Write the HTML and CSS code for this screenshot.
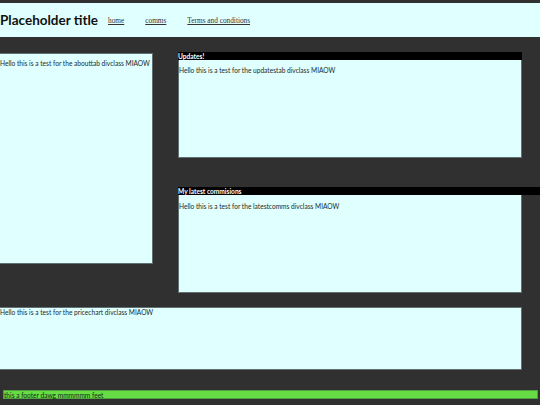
FILE: index.html
```html
<!DOCTYPE html>
<html>
<head>
<meta charset="utf-8">
<link rel="stylesheet" href="styles.css">
</head>
<body>
<header class="topbar">
  <h1 class="title">Placeholder title</h1>
  <nav class="nav">
    <a href="#" class="nav-link">home</a>
    <a href="#" class="nav-link">comms</a>
    <a href="#" class="nav-link">Terms and conditions</a>
  </nav>
</header>
<main class="main">
  <section class="abouttab">Hello this is a test for the abouttab divclass MIAOW</section>
  <div class="rightcol">
    <div class="panel">
      <div class="panel-head">Updates!</div>
      <div class="panel-body updates">Hello this is a test for the updatestab divclass MIAOW</div>
    </div>
    <div class="panel panel-wide">
      <div class="panel-head">My latest commisions</div>
      <div class="panel-body comms">Hello this is a test for the latestcomms divclass MIAOW</div>
    </div>
  </div>
</main>
<section class="pricechart">Hello this is a test for the pricechart divclass MIAOW</section>
<footer class="footer">this a footer dawg mmmmmm feet</footer>
</body>
</html>
```
FILE: styles.css
```css
html, body {
  margin: 0;
  padding: 0;
}
body {
  background: #303030;
  font-family: Lato, "Noto Sans", sans-serif;
  font-size: 6.6px;
  color: #1a2a2a;
  width: 540px;
  height: 405px;
  overflow: hidden;
}
.topbar {
  margin-top: 3px;
  height: 34px;
  background: #e0ffff;
  display: flex;
  align-items: center;
}
.title {
  margin: 0;
  font-family: Lato, sans-serif;
  font-weight: 700;
  font-size: 13.5px;
  color: #111;
}
.nav {
  display: flex;
  margin-left: 10px;
  gap: 21px;
}
.nav-link {
  font-family: "Liberation Serif", serif;
  font-size: 7.3px;
  color: #333;
}
.main {
  display: flex;
  gap: 25px;
  margin-top: 15px;
}
.abouttab {
  width: 153px;
  height: 211px;
  box-sizing: border-box;
  background: #e0ffff;
  border: 1px solid #607070;
  border-left: none;
  margin-top: 1px;
  padding-top: 5px;
}
.rightcol {
  display: flex;
  flex-direction: column;
  gap: 29px;
}
.panel-head {
  background: #000;
  color: #fff;
  font-weight: 700;
  height: 8px;
  line-height: 8px;
  width: 344px;
}
.panel-wide .panel-head {
  width: 362px;
}
.panel-body {
  width: 344px;
  height: 98px;
  box-sizing: border-box;
  background: #e0ffff;
  border: 1px solid #607070;
  border-top: none;
  padding-top: 6px;
}
.comms {
  padding-top: 7px;
}
.pricechart {
  margin-top: 14px;
  width: 522px;
  height: 63px;
  box-sizing: border-box;
  background: #e0ffff;
  border: 1px solid #607070;
  border-left: none;
  padding-top: 0;
}
.footer {
  margin: 20px 2px 0 3px;
  height: 9px;
  line-height: 8px;
  box-sizing: border-box;
  background: #66dd44;
  border: 1px solid #50a040;
  color: #1a2a1a;
}
```
